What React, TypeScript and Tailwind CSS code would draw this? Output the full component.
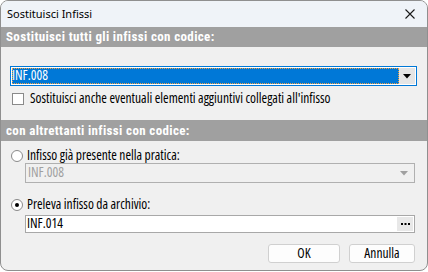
import React from "react";

function Arrow({ color }: { color: string }) {
  return (
    <svg width="8" height="5" viewBox="0 0 8 5">
      <path d="M0 0 H8 L4 4.5 Z" fill={color} />
    </svg>
  );
}

function Header({ text, h }: { text: string; h: string }) {
  return (
    <div
      className={`${h} shrink-0 bg-[#a0a0a0] flex items-center pl-[5px] text-white font-bold text-[13px] tracking-[0.35px] font-['Roboto_Condensed',sans-serif] [font-stretch:normal]`}
    >
      {text}
    </div>
  );
}

export default function App() {
  return (
    <div className="w-[428px] h-[272px] bg-white">
      <div className="w-[428px] h-[271px] border border-[#8f8f8f] rounded-[8px] overflow-hidden flex flex-col bg-[#f0f0f0] text-[13.5px] text-black font-['Open_Sans',sans-serif] [font-stretch:75%]">
        {/* title bar */}
        <div className="h-[26px] shrink-0 bg-[#eff3f8] flex items-center justify-between pl-[6px] pr-[12px]">
          <span className="text-[11px] font-['Noto_Sans',sans-serif] [font-stretch:normal]">Sostituisci Infissi</span>
          <svg width="10" height="10" viewBox="0 0 10 10">
            <path d="M0.5 0.5 L9.5 9.5 M9.5 0.5 L0.5 9.5" stroke="#1a1a1a" strokeWidth="1.1" />
          </svg>
        </div>

        <Header text="Sostituisci tutti gli infissi con codice:" h="h-[20px]" />

        {/* section 1 */}
        <div className="h-[73px] shrink-0 flex flex-col pl-[9px] pr-[10px] pt-[19px]">
          <div className="h-[20px] border border-[#0078d7] bg-white flex items-stretch p-[1px]">
            <div className="flex-1 bg-[#0078d7] text-white flex items-center outline-1 outline-dotted outline-[#f0a040] -outline-offset-1 leading-none">
              INF.008
            </div>
            <div className="w-[16px] bg-[#e5e5e5] flex items-center justify-center">
              <Arrow color="#000" />
            </div>
          </div>
          <div className="flex items-center h-[12px] mt-[7px] ml-[2px]">
            <div className="w-[12px] h-[12px] border border-[#8a8a8a] bg-white" />
            <span className="ml-[6px] leading-none">Sostituisci anche eventuali elementi aggiuntivi collegati all'infisso</span>
          </div>
        </div>

        <Header text="con altrettanti infissi con codice:" h="h-[21px]" />

        {/* section 2 */}
        <div className="flex-1 flex flex-col pl-[10px] pr-[12px] pt-[9px]">
          <div className="flex items-center h-[12px]">
            <div className="w-[12px] h-[12px] rounded-full border border-[#8a8a8a] bg-white" />
            <span className="ml-[4px] leading-none">Infisso già presente nella pratica:</span>
          </div>
          <div className="ml-[14px] mt-[1px] h-[20px] border border-[#b0b0b0] flex items-center justify-between pl-[2px] pr-[6px] text-[#a0a0a0]">
            <span className="leading-none">INF.008</span>
            <Arrow color="#a0a0a0" />
          </div>
          <div className="flex items-center h-[12px] mt-[16px]">
            <div className="w-[12px] h-[12px] rounded-full border border-[#8a8a8a] bg-white flex items-center justify-center">
              <div className="w-[4px] h-[4px] rounded-full bg-black" />
            </div>
            <span className="ml-[4px] leading-none">Preleva infisso da archivio:</span>
          </div>
          <div className="ml-[14px] mt-[4px] h-[18px] border border-[#a8a8a8] bg-white flex items-stretch p-[1px] pl-[1px]">
            <span className="flex-1 flex items-center leading-none">INF.014</span>
            <div className="w-[16px] bg-[#e8e8e8] flex items-center justify-center">
              <svg width="9" height="2" viewBox="0 0 9 2">
                <rect x="0" y="0" width="2" height="2" fill="#000" />
                <rect x="3.5" y="0" width="2" height="2" fill="#000" />
                <rect x="7" y="0" width="2" height="2" fill="#000" />
              </svg>
            </div>
          </div>
          <div className="flex justify-end gap-[9px] mt-[11px]">
            <div className="w-[72px] h-[19px] rounded-[3px] border border-[#d0d0d0] bg-[#fdfdfd] flex items-center justify-center leading-none">
              OK
            </div>
            <div className="w-[66px] h-[19px] rounded-[3px] border border-[#d0d0d0] bg-[#fdfdfd] flex items-center justify-center leading-none">
              Annulla
            </div>
          </div>
        </div>
      </div>
    </div>
  );
}
